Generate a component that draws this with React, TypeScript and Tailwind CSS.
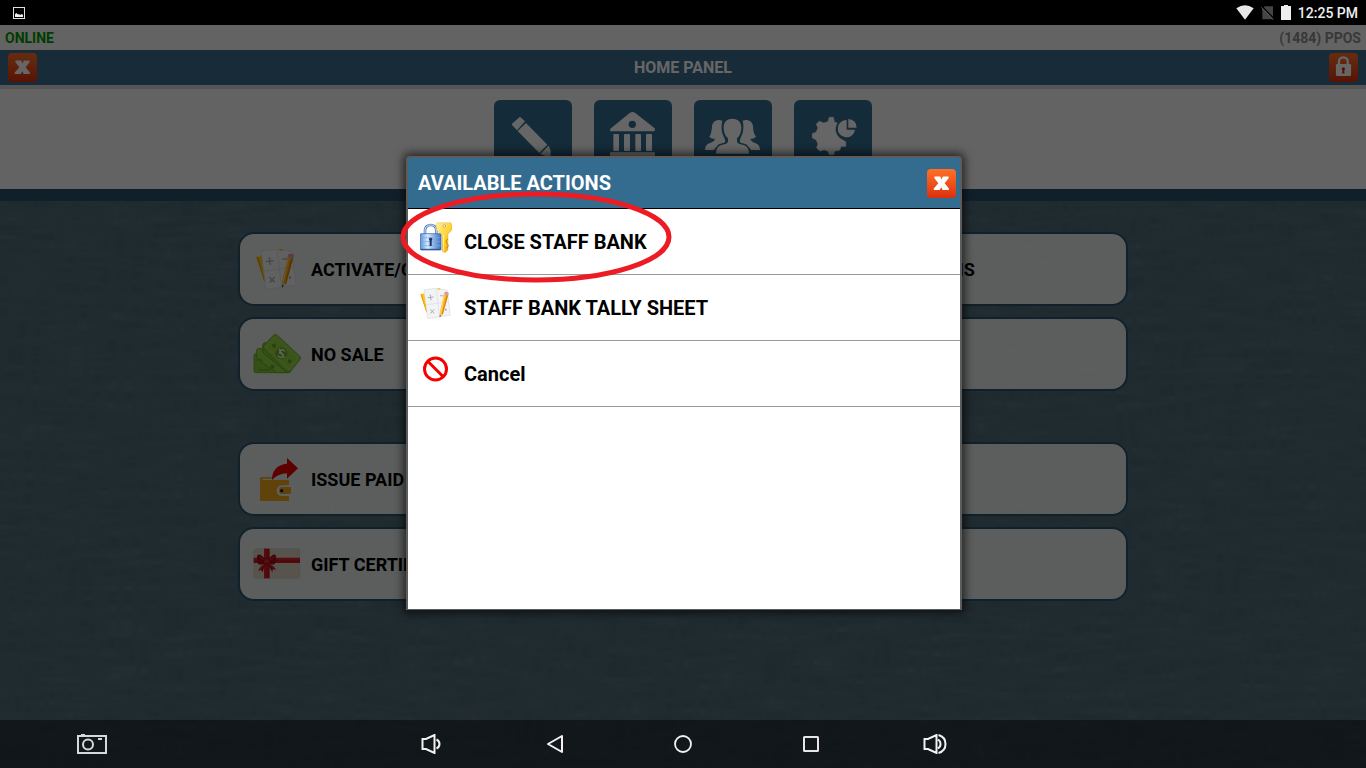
import { useId, type ReactNode } from 'react';

type IconProps = { className?: string };

function CloseIcon() {
  return (
    <svg viewBox="81 54 87 88" className="w-full h-full" fill="#ffffff">
      <path d="M102 77H121L124.500 86L129 77H146V82L134 97L147 113V118H128L124 109L119 118H101V113L115 97L103 82V77Z" />
    </svg>
  );
}

function LockIcon() {
  return (
    <svg viewBox="605 159 88 88" className="w-full h-full">
      <path d="M635 194V186A13.500 14 0 0 1 662 186V194" fill="none" stroke="#ffffff" strokeWidth="7" />
      <rect x="626" y="192" width="46" height="37" rx="4" fill="#ffffff" />
      <circle cx="648.500" cy="207" r="5" fill="#c92a0c" />
      <path d="M646 208H651L652 221H645Z" fill="#c92a0c" />
    </svg>
  );
}

function PencilIcon() {
  return (
    <svg viewBox="42 147 234 234" className="w-full h-full" fill="#ffffff">
      <path d="M120 197L135 211L111 238L96 222V218Z" />
      <path d="M138 216L202 281L178 306L113 240Z" />
      <path d="M206 284L212 300V314L196 315L181 309Z" />
    </svg>
  );
}

function BankIcon() {
  return (
    <svg viewBox="342 147 234 234" className="w-full h-full" fill="#ffffff">
      <path d="M450 185Q457 181 465 185L524 232Q527 241 520 241H395Q388 241 391 233Z" />
      <circle cx="457" cy="220" r="11" fill="#346c90" />
      <rect x="400" y="249" width="17" height="51" rx="2" />
      <rect x="432" y="249" width="18" height="51" rx="2" />
      <rect x="466" y="249" width="17" height="51" rx="2" />
      <rect x="498" y="249" width="18" height="51" rx="2" />
      <rect x="390" y="304" width="135" height="14" rx="2" />
    </svg>
  );
}

function StaffIcon() {
  return (
    <svg viewBox="642 147 234 234" className="w-full h-full" fill="#ffffff">
      <path d="M727 209C712 204 698 210 696 226C695 240 694 248 688 258Q695 264 705 264Q703 272 690 276Q675 281 675 297H702Q706 287 722 284L733 277Q738 268 733 260C724 245 723 225 727 209Z" />
      <path d="M788 209C803 204 817 210 819 226C820 240 821 248 828 258Q820 264 811 264Q813 272 825 276Q840 281 840 297H813Q809 287 793 284L782 277Q777 268 782 260C791 245 792 225 788 209Z" />
      <path
        d="M757 203C739 203 730 215 731 231C732 247 737 256 744 262V272Q741 279 727 281Q708 284 708 308H807Q807 284 788 281Q774 279 771 272V262C778 256 783 247 784 231C785 215 775 203 757 203Z"
        stroke="#346c90"
        strokeWidth="8"
        paintOrder="stroke"
      />
    </svg>
  );
}

function SettingsIcon() {
  return (
    <svg viewBox="942 147 234 234" className="w-full h-full" fill="#ffffff">
      <path
        d="M1048 199H1060L1063 213L1073 217L1084 211L1094 220L1088 268L1097 272V286L1083 286L1079 297L1064 300L1061 311H1048L1044 300L1032 296L1020 300L1010 291L1014 279L1009 267L997 260V248L1009 243L1014 231L1009 219L1018 211L1031 216L1044 212Z"
        stroke="#ffffff"
        strokeWidth="2"
        strokeLinejoin="round"
      />
      <circle cx="1100" cy="235" r="33" fill="#346c90" />
      <path d="M1100 207V236H1125A26 26 0 1 1 1100 207Z" />
      <path d="M1105 204A25 25 0 0 1 1130 230H1105Z" />
    </svg>
  );
}

function SheetIcon({ className }: IconProps) {
  return (
    <svg viewBox="69 75 144 144" className={className}>
      <path d="M79 108L94 104L106 178L103 182Z" fill="#ffc41e" />
      <path d="M79 108L84 107L104 176L103 182Z" fill="#e8a400" />
      <path d="M93 90L142 84L186 92L198 192L108 206Z" fill="#f2f3f5" stroke="#cfd2d6" strokeWidth="2" />
      <path d="M148 84H158V90H148Z" fill="#ffc41e" />
      <path d="M142 86L155 200M100 150L190 139" stroke="#d2d5d9" strokeWidth="2" />
      <path d="M108 122L131 119M118 109L121 132M118 169L134 184M134 168L119 185M157 114H172M176 170H184M180 166V174" stroke="#a9adb3" strokeWidth="4" />
      <path d="M173 107L190 110L168 189L157 197L156 183Z" fill="#ffb31c" />
      <path d="M184 109L190 110L168 189L163 191Z" fill="#df8600" />
      <path d="M175 110L160 183" stroke="#ffe08a" strokeWidth="3" />
      <path d="M156 183L168 189L157 198Z" fill="#ecd0a0" />
      <path d="M156 191L161 194L156 200Z" fill="#333333" />
      <path d="M173 107L176 99Q185 96 192 102L190 111Z" fill="#f08a9c" />
      <path d="M173 106L190 111" stroke="#b5bac4" strokeWidth="4" />
    </svg>
  );
}

function MoneyIcon({ className }: IconProps) {
  return (
    <svg viewBox="69 330 144 144" className={className}>
      <g stroke="#4f9a16" strokeWidth="2" strokeLinejoin="round">
        <path d="M72 403Q72 398 77 398L158 402L172 455H78Q72 455 72 449Z" fill="#86c83a" />
        <path d="M79 390Q80 383 86 382L150 390L178 455H140L80 413Z" fill="#93d142" />
        <path d="M98 372Q99 365 107 364L184 424L182 452Q176 457 168 452L99 395Z" fill="#86c83a" />
        <path d="M131 342Q136 338 141 342L209 405Q215 411 209 417L185 448Q176 457 168 449L102 383Q97 378 102 373Z" fill="#93d142" />
      </g>
      <path d="M137 349L204 411L177 444L108 378Z" fill="none" stroke="#b2e06c" strokeWidth="2" />
      <circle cx="154" cy="397" r="18" fill="#6fae2c" />
      <path d="M165 391Q157 382 150 390Q146 397 154 398Q163 400 158 407Q151 413 144 404M147 383L163 411" fill="none" stroke="#eefcd8" strokeWidth="4" />
      <circle cx="132" cy="374" r="6" fill="#66a32a" />
      <circle cx="179" cy="421" r="6" fill="#66a32a" />
      <path d="M80 418Q90 410 98 420M84 447H120" fill="none" stroke="#5b9c22" strokeWidth="3" />
      <circle cx="127" cy="437" r="6" fill="#66a32a" />
    </svg>
  );
}

function PaidOutIcon({ className }: IconProps) {
  return (
    <svg viewBox="69 75 144 144" className={className}>
      <path d="M90 141Q91 137 96 138H125V143H98V147H177V210H92Q90 210 90 206Z" fill="#f0a51c" />
      <path d="M184 163H155Q140 165 140 179Q140 193 155 195H184Z" fill="#ebedee" />
      <path d="M183 168H156Q147 169 147 179Q147 188 156 189H183Z" fill="#f0a51c" />
      <circle cx="155" cy="179" r="5" fill="#1b1b1b" />
      <path d="M126 147Q126 103 171 98V81L204 112L171 143V127Q145 127 126 147Z" fill="#e60000" />
    </svg>
  );
}

function GiftIcon({ className }: IconProps) {
  return (
    <svg viewBox="69 330 144 144" className={className}>
      <rect x="71" y="353" width="139" height="89" rx="6" fill="#d9d2c4" stroke="#c2b9a8" strokeWidth="1" />
      <path d="M102 353H119V442H102Z" fill="#c8141c" />
      <path d="M71 380H210V396H71Z" fill="#c8141c" />
      <path d="M105 353V442M71 384H210" stroke="#e8494a" strokeWidth="2" />
      <path d="M108 387Q90 364 82 373Q78 384 85 400Q98 404 108 393Z" fill="#a30d14" />
      <path d="M113 387Q131 364 137 373Q141 386 134 400Q122 403 113 393Z" fill="#a30d14" />
      <path d="M106 395Q90 404 84 421L92 416L98 424Q102 408 109 399ZM114 395Q131 402 138 417L129 414L127 424Q119 407 111 399Z" fill="#b51118" />
      <path d="M89 379Q98 382 103 389M132 379Q123 382 117 389M92 413Q97 404 103 401M130 410Q124 403 119 401" fill="none" stroke="#e33c40" strokeWidth="3" />
      <rect x="102" y="383" width="17" height="15" rx="4" fill="#d8232b" stroke="#870a10" strokeWidth="2" />
    </svg>
  );
}

function LockKeyIcon({ className }: IconProps) {
  return (
    <svg viewBox="72 216 96 96" className={className}>
      <defs>
        <linearGradient id="lock-body" x1="0" y1="0" x2="1" y2="0">
          <stop offset="0" stopColor="#5d94dc" />
          <stop offset="0.35" stopColor="#d6e9fd" />
          <stop offset="1" stopColor="#3b73c5" />
        </linearGradient>
        <linearGradient id="key-gold" x1="0" y1="0" x2="1" y2="1">
          <stop offset="0" stopColor="#fff3a0" />
          <stop offset="0.5" stopColor="#ffd43a" />
          <stop offset="1" stopColor="#e79f10" />
        </linearGradient>
      </defs>
      <path d="M87 253V240Q89 225 104 225Q119 225 121 240V253" fill="none" stroke="#5f86bd" strokeWidth="8" />
      <path d="M87 253V240Q89 225 104 225Q119 225 121 240V253" fill="none" stroke="#c9dcf3" strokeWidth="3" />
      <rect x="73" y="251" width="62" height="49" rx="2" fill="url(#lock-body)" stroke="#2558a4" strokeWidth="2" />
      <path d="M74 263H134M74 275H134M74 287H134" stroke="#7aa8e2" strokeWidth="2" />
      <path d="M75 298H134" stroke="#1e4d98" strokeWidth="3" />
      <path d="M104 263A5 5 0 0 1 107 272V288H101V272A5 5 0 0 1 104 263Z" fill="#173263" />
      <path d="M124 218H164L168 223V239L156 253V300L147 308L138 303V254L122 241L120 224Z" fill="url(#key-gold)" stroke="#dba21c" strokeWidth="1" />
      <path d="M156 267L151 271V279L156 283V291L151 294" fill="none" stroke="#c98908" strokeWidth="3" />
      <path d="M143 254V303" stroke="#fff3a6" strokeWidth="3" />
      <circle cx="145" cy="228" r="4" fill="#ffffff" stroke="#b9892a" strokeWidth="2" />
    </svg>
  );
}

function CancelIcon({ className }: IconProps) {
  return (
    <svg viewBox="0 0 32 32" className={className} fill="none" stroke="#f60000" strokeWidth="3">
      <circle cx="15.500" cy="15" r="11" />
      <path d="M8 7.500L23 22.500" />
    </svg>
  );
}

/* Woven cloth pattern behind the panel */
function Texture() {
  const id = useId();
  return (
    <svg className="absolute inset-0 w-full h-full opacity-15 pointer-events-none" aria-hidden="true">
      <filter id={`${id}-h`} x="0" y="0" width="100%" height="100%">
        <feTurbulence type="fractalNoise" baseFrequency="0.02 0.12" numOctaves="3" seed="4" />
        <feColorMatrix values="0 0 0 0 0.55  0 0 0 0 0.7  0 0 0 0 0.76  1.600 0 0 0 -0.6" />
      </filter>
      <filter id={`${id}-v`} x="0" y="0" width="100%" height="100%">
        <feTurbulence type="fractalNoise" baseFrequency="0.12 0.02" numOctaves="3" seed="9" />
        <feColorMatrix values="0 0 0 0 0.15  0 0 0 0 0.22  0 0 0 0 0.25  2.400 0 0 0 -0.8" />
      </filter>
      <rect width="100%" height="100%" filter={`url(#${id}-h)`} />
      <rect width="100%" height="100%" filter={`url(#${id}-v)`} />
    </svg>
  );
}

function SquareButton({ label, children }: { label: string; children: ReactNode }) {
  return (
    <button
      type="button"
      aria-label={label}
      className="w-[29px] h-[29px] rounded-sm bg-gradient-to-b from-[#ff7028] to-[#dc2e0c]"
    >
      {children}
    </button>
  );
}

const tabs = [
  { label: 'Edit', icon: <PencilIcon /> },
  { label: 'Bank', icon: <BankIcon /> },
  { label: 'Staff', icon: <StaffIcon /> },
  { label: 'Settings', icon: <SettingsIcon /> },
];

const iconClass = 'w-12 h-12 shrink-0';

const bankButtons = [
  { label: 'ACTIVATE/CLOSE', icon: <SheetIcon className={iconClass} /> },
  { label: 'MANAGE TRANSACTIONS', icon: <SheetIcon className={iconClass} /> },
  { label: 'NO SALE', icon: <MoneyIcon className={iconClass} /> },
  { label: 'CASH DROP', icon: <MoneyIcon className={iconClass} /> },
];

const issueButtons = [
  { label: 'ISSUE PAID OUT', icon: <PaidOutIcon className={iconClass} /> },
  { label: 'PAID IN', icon: <PaidOutIcon className={iconClass} /> },
  { label: 'GIFT CERTIFICATE', icon: <GiftIcon className={iconClass} /> },
  { label: 'GIFT CARD', icon: <GiftIcon className={iconClass} /> },
];

const actions = [
  { label: 'CLOSE STAFF BANK', icon: <LockKeyIcon className="w-8 h-8" /> },
  { label: 'STAFF BANK TALLY SHEET', icon: <SheetIcon className="w-9 h-9 -m-0.5" /> },
  { label: 'Cancel', icon: <CancelIcon className="w-8 h-8" /> },
];

function ButtonGrid({ items }: { items: { label: string; icon: ReactNode }[] }) {
  return (
    <div className="grid grid-cols-2 gap-x-2.5 gap-y-[11px]">
      {items.map((item) => (
        <button
          key={item.label}
          type="button"
          className="h-[74px] flex items-center gap-2.5 px-[13px] pt-0.5 rounded-2xl border-2 border-[#28546f] bg-[#ebedee]/98 text-lg font-bold text-black whitespace-nowrap"
        >
          {item.icon}
          {item.label}
        </button>
      ))}
    </div>
  );
}

function SystemBar() {
  return (
    <div className="relative z-20 h-[25px] bg-black flex items-center justify-between pl-[13px] pr-2">
      <svg viewBox="0 0 12 12" className="w-3 h-3">
        <rect x="0.500" y="0.500" width="11" height="11" fill="none" stroke="#e0e0e0" />
        <path d="M2 10V7L3.500 6L5 7.500L6 7L7 8L9 7L10 8V10Z" fill="#f0f0f0" />
      </svg>
      <div className="flex items-center gap-[7px] text-[#eeeeee]">
        <svg viewBox="0 0 54 45" className="w-[18px] h-[15px]">
          <path d="M1 10Q27 -8 53 10L27 44Z" fill="#e8e8e8" />
        </svg>
        <svg viewBox="0 0 39 42" className="w-[13px] h-[14px]">
          <path d="M11 1H36V40H4V10Z" fill="#454545" />
          <path d="M3 1L39 38" stroke="#000000" strokeWidth="4" />
          <path d="M1 4L37 41" stroke="#5c5c5c" strokeWidth="3" />
        </svg>
        <svg viewBox="0 0 30 45" className="w-2.5 h-[15px]">
          <path d="M9 0H21V3H30V45H0V3H9Z" fill="#eeeeee" />
        </svg>
        <span className="text-sm font-medium">12:25 PM</span>
      </div>
    </div>
  );
}

function NavBar() {
  return (
    <nav className="relative z-20 h-12 grid grid-cols-[1fr_auto_1fr] items-center bg-black/45">
      <button type="button" aria-label="Screenshot" className="w-[30px] ml-[77px]">
        <svg viewBox="0 0 30 20" className="w-[30px] h-5" fill="none" stroke="#d6d8d9" strokeWidth="2">
          <rect x="1" y="2" width="28" height="17" />
          <circle cx="11" cy="10.500" r="5" />
          <path d="M4 0.500H8M21 5H25" />
        </svg>
      </button>
      <div className="flex items-center">
        <button type="button" aria-label="Volume down" className="w-[120px] flex justify-center">
          <svg viewBox="0 0 20 20" className="w-5 h-5" fill="none" stroke="#f2f2f2" strokeWidth="2">
            <path d="M1.500 5H5L13.500 1V19L5 15H1.500ZM15.500 5.500Q18.500 7 18.500 10T15.500 14.500" />
          </svg>
        </button>
        <button type="button" aria-label="Back" className="w-32 flex justify-center">
          <svg viewBox="0 0 18 20" className="w-[18px] h-5" fill="none" stroke="#f2f2f2" strokeWidth="2" strokeLinejoin="round">
            <path d="M16 2V18L2 10Z" />
          </svg>
        </button>
        <button type="button" aria-label="Home" className="w-32 flex justify-center">
          <svg viewBox="0 0 18 18" className="w-[18px] h-[18px]" fill="none" stroke="#f2f2f2" strokeWidth="1.800">
            <circle cx="9" cy="9" r="8" />
          </svg>
        </button>
        <button type="button" aria-label="Recent apps" className="w-32 flex justify-center">
          <svg viewBox="0 0 16 16" className="w-4 h-4" fill="none" stroke="#e6e6e6" strokeWidth="2">
            <rect x="1" y="1" width="14" height="14" rx="0.500" />
          </svg>
        </button>
        <button type="button" aria-label="Volume up" className="w-[120px] flex justify-center">
          <svg viewBox="0 0 24 20" className="w-6 h-5" fill="none" stroke="#f2f2f2" strokeWidth="2">
            <path d="M1.500 5H5L13.500 1V19L5 15H1.500ZM15 5.500Q17.500 7 17.500 10T15 14.500M15.500 1Q22.500 3 22.500 10T15.500 19" />
          </svg>
        </button>
      </div>
    </nav>
  );
}

export default function App() {
  return (
    <div className="relative min-h-screen flex flex-col overflow-hidden bg-[#4d6876] font-['Roboto',sans-serif]">
      <Texture />
      <SystemBar />

      <div className="relative h-[25px] flex items-center justify-between px-[5px] bg-[#f8f8f8] text-sm font-bold">
        <span className="text-[#009600]">ONLINE</span>
        <span className="text-[#8c8c8c]">(1484) PPOS</span>
      </div>

      <header className="relative h-[35px] flex items-center justify-between px-2 bg-[#3a6c90]">
        <SquareButton label="Close panel">
          <CloseIcon />
        </SquareButton>
        <h1 className="text-base font-bold text-white">HOME PANEL</h1>
        <SquareButton label="Lock">
          <LockIcon />
        </SquareButton>
      </header>

      <div className="relative h-[116px] flex items-center justify-center gap-[22px] border-t-4 border-t-[#d8d8d8] border-b-12 border-b-[#28526c] bg-[#f8f8f8]">
        {tabs.map((tab) => (
          <button
            key={tab.label}
            type="button"
            aria-label={tab.label}
            className="w-[78px] h-[78px] rounded-md bg-[#346c90]"
          >
            {tab.icon}
          </button>
        ))}
      </div>

      <main className="relative flex-1 w-full max-w-[890px] mx-auto pt-[31px] flex flex-col gap-[51px]">
        <ButtonGrid items={bankButtons} />
        <ButtonGrid items={issueButtons} />
      </main>

      <div className="absolute inset-0 z-10 flex justify-center items-start pt-[156px] pl-0.5 bg-black/60">
        <section
          role="dialog"
          aria-label="Available actions"
          className="relative w-[556px] h-[454px] bg-white border-2 border-b border-[#5c5c5c] rounded-t-sm shadow-[0_0_8px_3px_rgba(0,0,0,0.6)]"
        >
          <div className="h-[51px] flex items-center justify-between pl-2.5 pr-1 bg-[#346c90] border-b border-black">
            <h2 className="text-xl font-bold text-white">AVAILABLE ACTIONS</h2>
            <SquareButton label="Close">
              <CloseIcon />
            </SquareButton>
          </div>
          <ul>
            {actions.map((action) => (
              <li key={action.label} className="border-b border-[#999999]">
                <button
                  type="button"
                  className="w-full h-[65px] flex items-start gap-3 pl-3 pt-[13px] text-xl leading-10 font-bold text-black text-left"
                >
                  {action.icon}
                  {action.label}
                </button>
              </li>
            ))}
          </ul>
          <svg
            viewBox="0 0 272 92"
            className="absolute -left-2 top-[33px] w-[272px] h-[92px] pointer-events-none"
            fill="none"
            stroke="#ed1c24"
            strokeWidth="5"
            aria-hidden="true"
          >
            <ellipse cx="136" cy="46" rx="133" ry="43" />
          </svg>
        </section>
      </div>

      <NavBar />
    </div>
  );
}
